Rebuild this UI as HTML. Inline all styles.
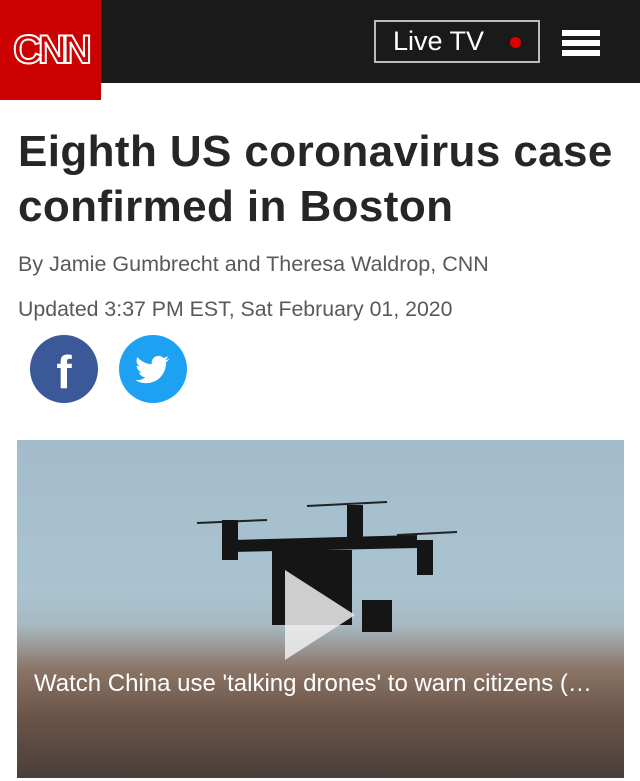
<!DOCTYPE html>
<html><head><style>
body{margin:0;width:640px;height:781px;overflow:hidden;background:#fff;font-family:"Liberation Sans",sans-serif;position:relative}
.hdr{position:absolute;left:0;top:0;width:640px;height:83px;background:#1a1a1a}
.logo{position:absolute;left:0;top:0;width:101px;height:100px;background:#cc0000;color:#cc0000;font:bold 40px "Liberation Sans",sans-serif;text-align:center;line-height:100px;letter-spacing:-4px;-webkit-text-stroke:2px #fff}
.live{position:absolute;left:374px;top:20px;height:39px;border:2px solid #bbb;color:#fff;font-size:27px;line-height:39px;padding-left:17px;width:145px}
.dot{position:absolute;left:134px;top:15px;width:11px;height:11px;border-radius:50%;background:#d00}
.hb{position:absolute;left:562px;width:38px;height:6px;background:#fff}
h1{position:absolute;left:18px;top:124px;margin:0;font-size:44px;letter-spacing:0.4px;line-height:55px;font-weight:bold;color:#262626;width:630px}
.by{position:absolute;left:18px;top:252px;font-size:21.5px;color:#595959}
.up{position:absolute;left:18px;top:297px;font-size:21.3px;color:#595959}
.c{position:absolute;top:335px;width:68px;height:68px;border-radius:50%}
.img{position:absolute;left:17px;top:440px;width:607px;height:338px;overflow:hidden;background:linear-gradient(#a3bccb 0%,#aac3d1 45%,#a7b8c0 55%,#8a7466 68%,#6a5448 82%,#4a3e3a 100%)}
.cap{position:absolute;left:34px;top:662px;width:600px;color:#fff;font-size:24px;line-height:44px;white-space:nowrap}
</style></head><body>
<div class="hdr"></div>
<div class="logo">CNN</div>
<div class="live">Live TV<div class="dot"></div></div>
<div class="hb" style="top:30px"></div><div class="hb" style="top:40px"></div><div class="hb" style="top:50px"></div>
<h1>Eighth US coronavirus case confirmed in Boston</h1>
<div class="by">By Jamie Gumbrecht and Theresa Waldrop, CNN</div>
<div class="up">Updated 3:37 PM EST, Sat February 01, 2020</div>
<div class="c" style="left:30px;background:#3b5998;color:#fff;font:bold 46px 'Liberation Sans',sans-serif;text-align:center;line-height:74px">f</div>
<div class="c" style="left:119px;background:#1da1f2">
<svg width="68" height="68" viewBox="0 0 68 68"><path d="M50 24c-1.3.6-2.6 1-4 1.1 1.4-.9 2.5-2.2 3-3.8-1.3.8-2.8 1.4-4.4 1.7-2.6-2.8-7-2.9-9.8-.3-1.8 1.7-2.5 4.2-2 6.6-5.6-.3-10.8-2.9-14.3-7.3-1.9 3.2-.9 7.3 2.2 9.3-1.1 0-2.2-.3-3.1-.8 0 3.3 2.3 6.2 5.5 6.8-1 .3-2.1.3-3.1.1.9 2.8 3.5 4.8 6.5 4.8-2.9 2.3-6.5 3.3-10.2 2.9 3.2 2 6.9 3.1 10.7 3.1 12.9 0 20-10.7 20-20v-.9c1.4-1 2.6-2.2 3.5-3.6z" fill="#fff"/></svg></div>
<div class="img">
<svg width="607" height="338" viewBox="0 0 607 338" style="position:absolute;left:0;top:0">
<g stroke="#222" stroke-width="2"><line x1="180" y1="83" x2="250" y2="80"/><line x1="290" y1="66" x2="370" y2="62"/><line x1="380" y1="95" x2="440" y2="92"/></g>
<g fill="#151515"><polygon points="215,100 400,95 400,108 215,112"/><rect x="205" y="80" width="16" height="40"/><rect x="330" y="65" width="16" height="40"/><rect x="400" y="100" width="16" height="35"/><rect x="255" y="110" width="80" height="75"/><rect x="345" y="160" width="30" height="32"/></g>
<polygon points="268,130 268,220 338,175" fill="#eee" opacity="0.85"/>
</svg>
</div>
<div class="cap">Watch China use 'talking drones' to warn citizens (…</div>
</body></html>
